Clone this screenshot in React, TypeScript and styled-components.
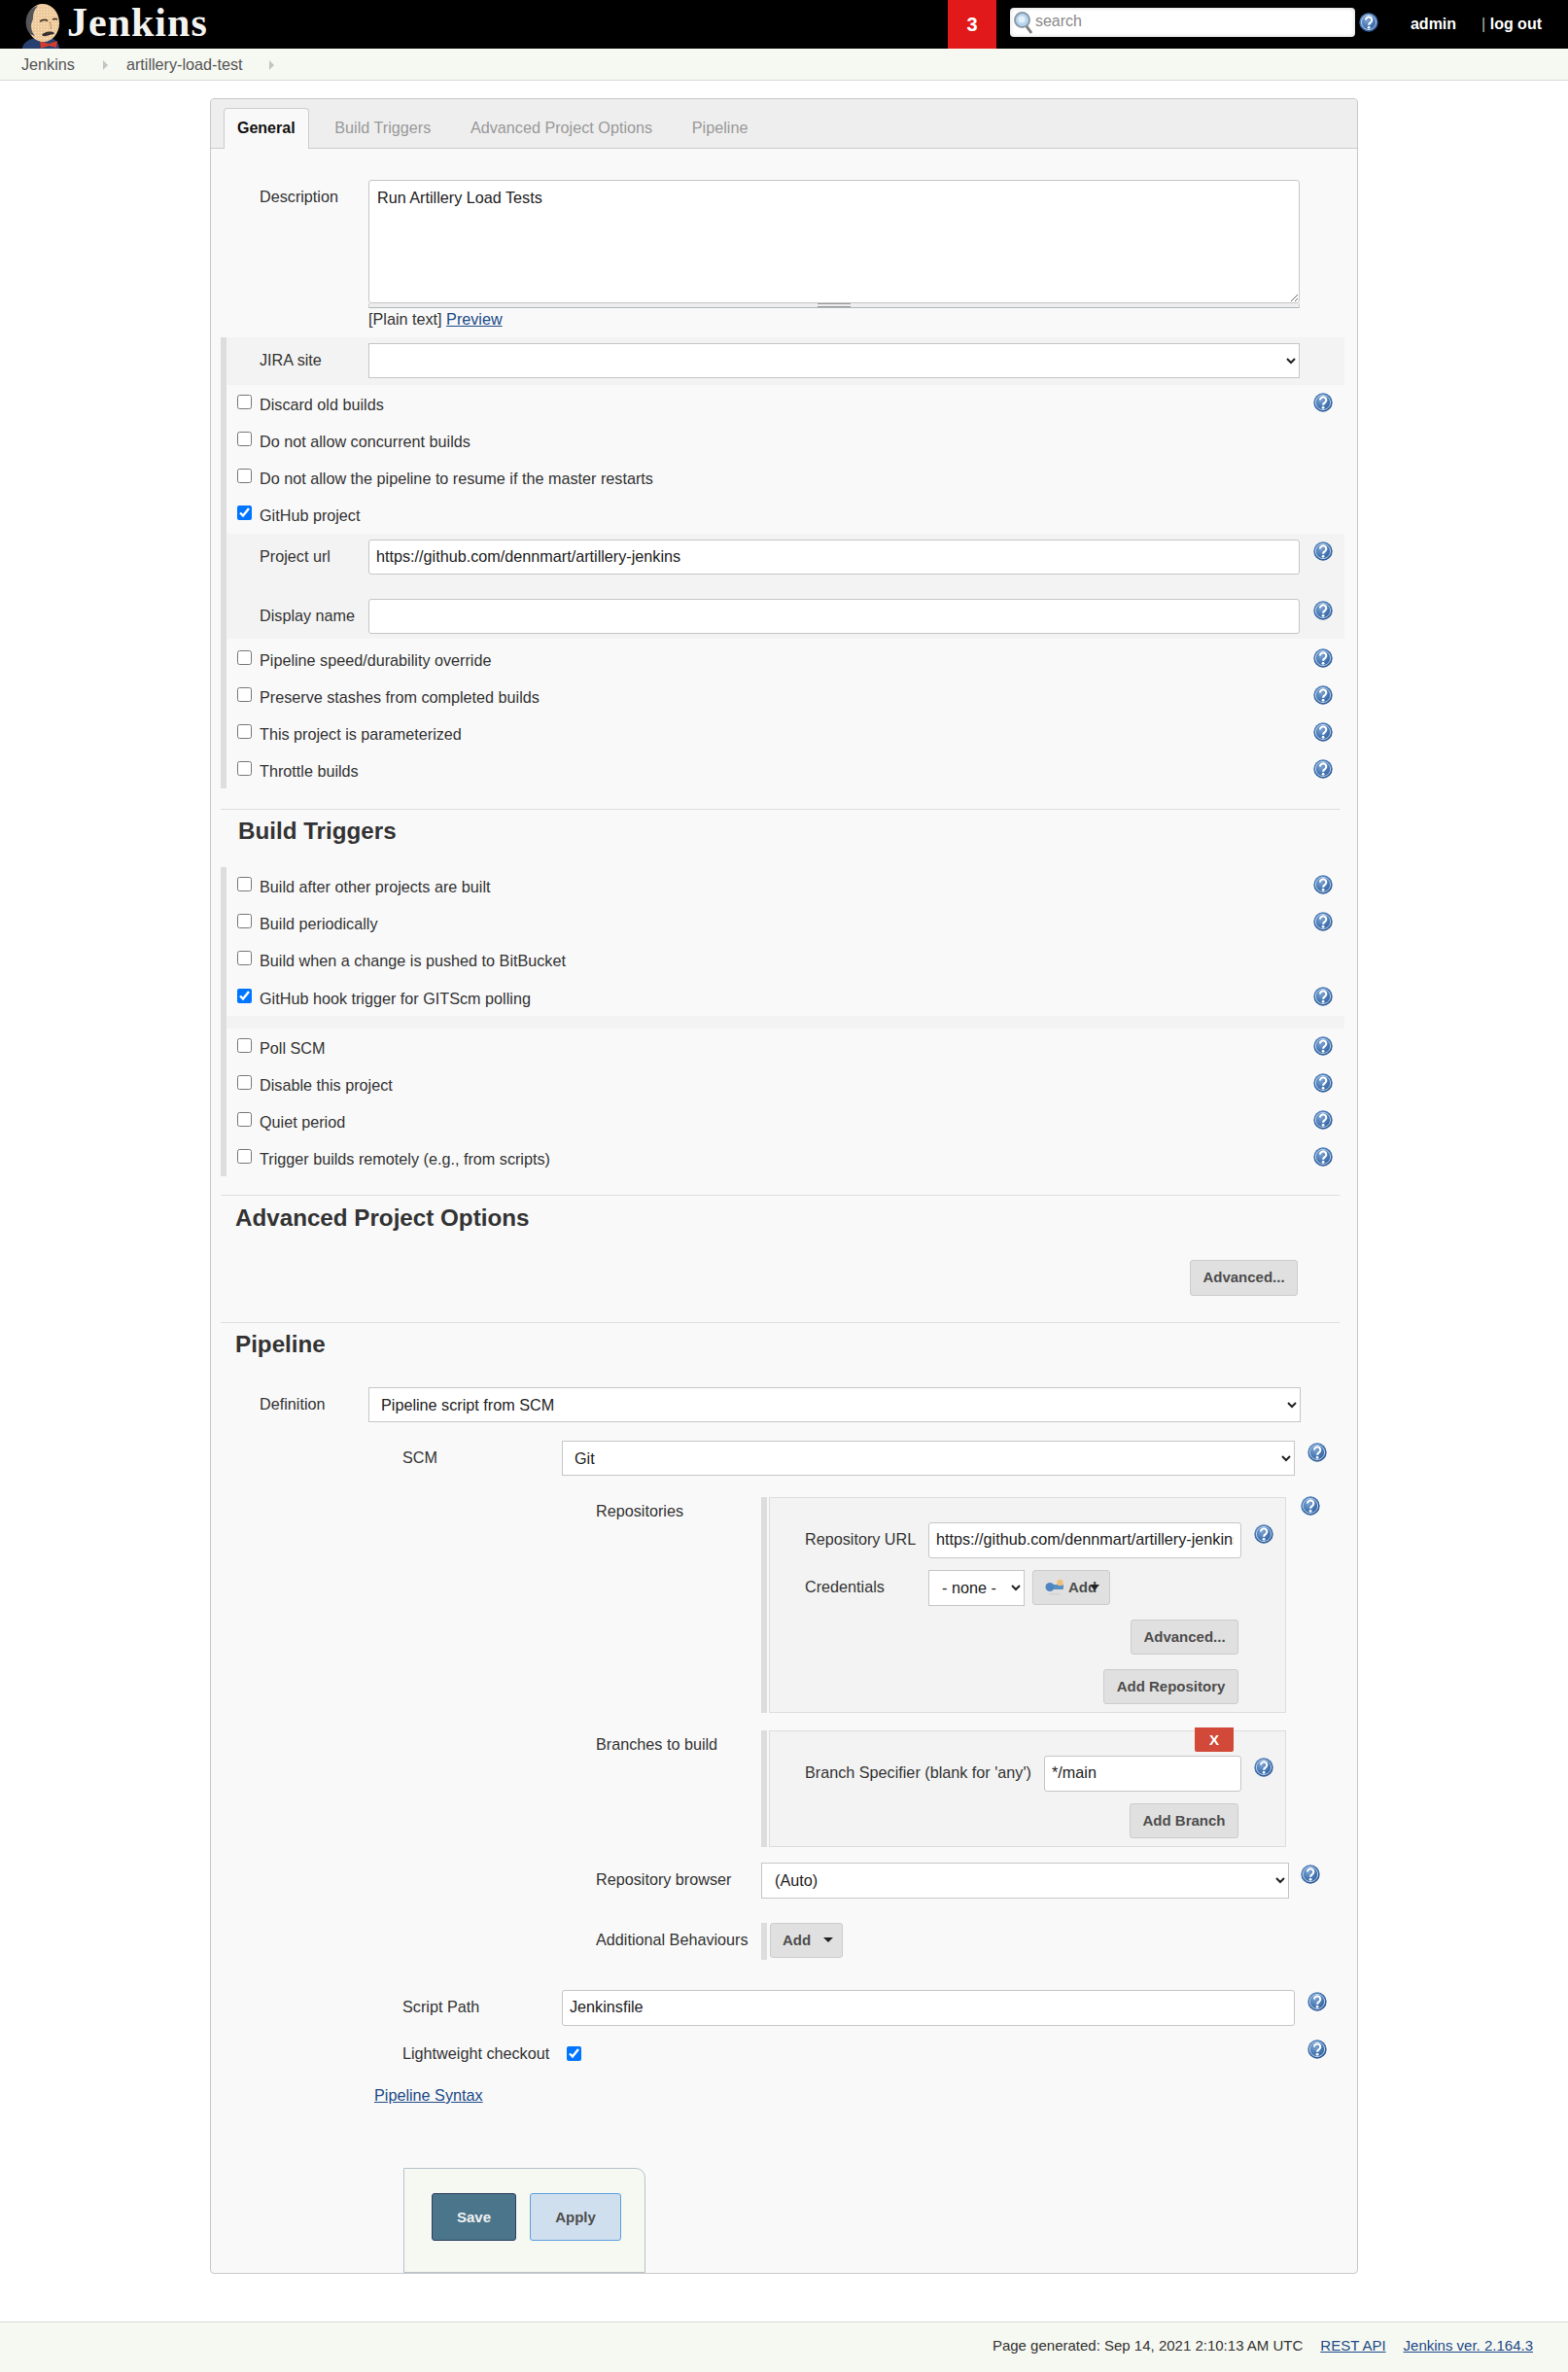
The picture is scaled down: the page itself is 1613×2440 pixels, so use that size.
import React from "react";
import styled, { createGlobalStyle } from "styled-components";

const Global = createGlobalStyle`
  html, body { margin: 0; padding: 0; background: #fff; }
  body { font-family: "Liberation Sans", Arial, sans-serif; font-size: 16.2px; color: #333; line-height: 16px; }
  * { box-sizing: border-box; }
`;

const Page = styled.div`
  width: 1613px;
  height: 2440px;
  display: flex;
  flex-direction: column;
`;

const Header = styled.header`
  height: 50px;
  background: #000;
  display: flex;
  align-items: flex-start;
  flex: none;
`;
const LogoMark = styled.svg`
  width: 60px;
  height: 50px;
  margin-left: 15px;
  flex: none;
`;
const LogoText = styled.span`
  font-family: "Liberation Serif", "Times New Roman", serif;
  font-weight: 700;
  font-size: 42px;
  line-height: 47px;
  letter-spacing: 1px;
  color: #f3f3f1;
  margin-left: -6px;
`;
const Count = styled.div`
  margin-left: auto;
  width: 50px;
  height: 50px;
  background: #e2191a;
  color: #fff;
  font-weight: 700;
  font-size: 20px;
  line-height: 50px;
  text-align: center;
  flex: none;
`;
const SearchBox = styled.div`
  width: 355px;
  height: 30px;
  margin: 8px 0 0 14px;
  border-radius: 4px;
  background: #fff;
  box-shadow: inset 0 0 4px rgba(0, 0, 0, 0.2);
  display: flex;
  align-items: flex-start;
  flex: none;
`;
const SearchIcon = styled.svg`
  width: 22px;
  height: 24px;
  margin: 4px 0 0 3px;
  flex: none;
`;
const SearchInput = styled.input`
  border: 0;
  outline: 0;
  background: transparent;
  font: 16px/28px "Liberation Sans", Arial, sans-serif;
  padding: 0;
  margin-left: 1px;
  height: 28px;
  flex: 1;
  &::placeholder { color: #8a8a8a; opacity: 1; }
`;
const HeaderLink = styled.a<{ $ml: number }>`
  color: #fff;
  font-weight: 700;
  font-size: 16px;
  line-height: 50px;
  margin-left: ${(p) => p.$ml}px;
  flex: none;
`;
const Pipe = styled.span`
  font-weight: 400;
  color: #bbb;
`;
const HeaderEnd = styled.div`
  width: 27px;
  flex: none;
`;

const Crumbs = styled.nav`
  height: 33px;
  background: #f6f8f2;
  border-bottom: 1px solid #d9d9d5;
  display: flex;
  align-items: center;
  padding-left: 22px;
  flex: none;
  color: #555;
`;
const CrumbArrow = styled.i<{ $ml: number; $mr: number }>`
  width: 0;
  height: 0;
  margin: 1px ${(p) => p.$mr}px 0 ${(p) => p.$ml}px;
  border-left: 5px solid #c4c4c4;
  border-top: 5px solid transparent;
  border-bottom: 5px solid transparent;
`;

const Panel = styled.main`
  width: 1181px;
  height: 2238px;
  margin: 18px 0 0 216px;
  border: 1px solid #c8c8c8;
  border-radius: 4px;
  background: #f9f9f9;
  flex: none;
`;
const TabBar = styled.div`
  height: 51px;
  background: #eeeeee;
  border-bottom: 1px solid #cccccc;
  border-radius: 3px 3px 0 0;
  display: flex;
  align-items: flex-end;
  padding-left: 13px;
  gap: 12.7px;
`;
const Tab = styled.div<{ $active?: boolean }>`
  height: ${(p) => (p.$active ? 42 : 41)}px;
  padding: ${(p) => (p.$active ? 12 : 11)}px 13px 0;
  margin-bottom: ${(p) => (p.$active ? -1 : 0)}px;
  font-weight: ${(p) => (p.$active ? 700 : 400)};
  font-size: ${(p) => (p.$active ? 16 : 16.2)}px;
  color: ${(p) => (p.$active ? "#111" : "#999")};
  background: ${(p) => (p.$active ? "#f9f9f9" : "transparent")};
  border: 1px solid ${(p) => (p.$active ? "#ccc" : "transparent")};
  border-bottom: 0;
  border-radius: 4px 4px 0 0;
`;

const Body = styled.div`
  padding: 0 13px 0 10px;
`;

const Field = styled.div<{ $mt?: number }>`
  display: flex;
  align-items: flex-start;
  margin-top: ${(p) => p.$mt ?? 0}px;
`;
const FieldLabel = styled.label<{ $w: number; $pad: number; $top?: number }>`
  width: ${(p) => p.$w}px;
  padding: ${(p) => p.$top ?? 9}px 0 0 ${(p) => p.$pad}px;
  flex: none;
`;
const Control = styled.div<{ $w: number }>`
  width: ${(p) => p.$w}px;
  flex: none;
`;
const TextArea = styled.textarea`
  display: block;
  width: 100%;
  height: 127px;
  padding: 9px 8px;
  border: 1px solid #c6c6c6;
  border-radius: 3px;
  background: #fff;
  color: #222;
  font: 16.2px/16px "Liberation Sans", Arial, sans-serif;
  resize: vertical;
`;
const Grippie = styled.div`
  height: 5px;
  background: #eeeeee;
  border: 1px solid #cfcfcf;
  border-top: 0;
  border-bottom-color: #aeb4b8;
  display: flex;
  justify-content: center;
  align-items: flex-start;
`;
const GripHandle = styled.span`
  width: 34px;
  height: 4px;
  border-top: 1px solid #999;
  border-bottom: 1px solid #999;
`;
const Below = styled.div`
  margin: 3px 0 11px;
`;
const LinkText = styled.a`
  color: #204a87;
  text-decoration: underline;
`;

const TextInput = styled.input<{ $w: number; $h?: number }>`
  display: block;
  width: ${(p) => p.$w}px;
  height: ${(p) => p.$h ?? 36}px;
  padding: 0 7px 2px;
  border: 1px solid #c6c6c6;
  border-radius: 3px;
  background: #fff;
  color: #222;
  font: 16.2px "Liberation Sans", Arial, sans-serif;
  flex: none;
  outline: 0;
`;
const Select = styled.select<{ $w: number; $h?: number; $pl?: number }>`
  display: block;
  width: ${(p) => p.$w}px;
  height: ${(p) => p.$h ?? 36}px;
  padding: 0 0 1px ${(p) => p.$pl ?? 8}px;
  border: 1px solid #c6c6c6;
  border-radius: 0;
  background: #fff;
  color: #222;
  font: 16.2px "Liberation Sans", Arial, sans-serif;
  flex: none;
`;
const Btn = styled.button<{ $w: number; $h?: number }>`
  width: ${(p) => p.$w}px;
  height: ${(p) => p.$h ?? 36}px;
  padding: 0 0 2px;
  border: 1px solid #cccccc;
  border-radius: 3px;
  background: #e0e0e0;
  color: #4d4d4d;
  font: 700 15px "Liberation Sans", Arial, sans-serif;
  flex: none;
`;
const BtnRow = styled.div<{ $mt?: number; $pr: number }>`
  display: flex;
  justify-content: flex-end;
  margin-top: ${(p) => p.$mt ?? 0}px;
  padding-right: ${(p) => p.$pr}px;
`;
const MenuBtn = styled(Btn)<{ $ml: number }>`
  margin-left: ${(p) => p.$ml}px;
  display: flex;
  align-items: center;
  padding-left: 12px;
  position: relative;
`;
const Caret = styled.i`
  width: 0;
  height: 0;
  border-top: 5px solid #222;
  border-left: 5px solid transparent;
  border-right: 5px solid transparent;
  margin-left: 13px;
`;
const OverCaret = styled.i`
  position: absolute;
  left: 58px;
  top: 14px;
  width: 0;
  height: 0;
  border-top: 6px solid #222;
  border-left: 5px solid transparent;
  border-right: 5px solid transparent;
`;
const KeyIcon = styled.svg`
  width: 20px;
  height: 20px;
  margin-right: 4px;
  flex: none;
`;

const HelpMark = styled.svg<{ $ml?: number; $mt?: number }>`
  width: 20px;
  height: 20px;
  margin-left: ${(p) => (p.$ml === undefined ? "auto" : `${p.$ml}px`)};
  margin-top: ${(p) => p.$mt ?? 0}px;
  flex: none;
`;
const GradientDefs = styled.svg`
  position: absolute;
  width: 0;
  height: 0;
`;
const HelpGradient = () => (
  <GradientDefs>
    <defs>
      <radialGradient id="hlp" cx="40%" cy="35%" r="70%">
        <stop offset="0%" stopColor="#7fa6d4" />
        <stop offset="60%" stopColor="#4273b0" />
        <stop offset="100%" stopColor="#2a5490" />
      </radialGradient>
      <pattern id="skin" width="3" height="3" patternUnits="userSpaceOnUse">
        <rect width="3" height="3" fill="#eec99a" />
        <rect width="1" height="1" fill="#fbeedd" />
      </pattern>
    </defs>
  </GradientDefs>
);
const Help = ({ ml, mt }: { ml?: number; mt?: number }) => (
  <HelpMark viewBox="0 0 20 20" $ml={ml} $mt={mt}>
    <circle cx="10" cy="10" r="9.7" fill="url(#hlp)" />
    <circle cx="10" cy="10" r="7.6" fill="none" stroke="#b9d0ea" strokeWidth="1" />
    <path d="M6.9 7.5a3.2 3.2 0 1 1 5 2.7c-1.2.8-1.8 1.2-1.8 2.6" fill="none" stroke="#fff" strokeWidth="2.1" />
    <circle cx="10.1" cy="15.3" r="1.4" fill="#fff" />
  </HelpMark>
);

const Barred = styled.div`
  border-left: 6px solid #dddddd;
`;
const GrayBlock = styled.div<{ $h: number; $mt?: number; $mb?: number; $pt?: number }>`
  height: ${(p) => p.$h}px;
  margin-top: ${(p) => p.$mt ?? 0}px;
  margin-bottom: ${(p) => p.$mb ?? 0}px;
  padding-top: ${(p) => p.$pt ?? 0}px;
  background: #f3f3f3;
`;
const CheckRow = styled.div<{ $h?: number }>`
  height: ${(p) => p.$h ?? 38}px;
  display: flex;
  align-items: flex-start;
  padding: 10px 12px 0 11px;
`;
const Check = styled.input<{ $mt?: number }>`
  width: 15px;
  height: 15px;
  margin: ${(p) => p.$mt ?? 0}px 0 0;
  flex: none;
  accent-color: #0075ff;
`;
const CheckLabel = styled.label`
  margin: 2px 0 0 8px;
`;
const Divider = styled.div<{ $mt: number }>`
  width: 1151px;
  height: 1px;
  margin-top: ${(p) => p.$mt}px;
  background: #dfdfdf;
`;
const Heading = styled.h2<{ $pad: number; $pt: number; $h: number }>`
  margin: 0;
  height: ${(p) => p.$h}px;
  padding: ${(p) => p.$pt}px 0 0 ${(p) => p.$pad}px;
  font-size: 24.2px;
  line-height: 28px;
  font-weight: 700;
  color: #333;
`;

const RepeatWrap = styled.div<{ $w: number }>`
  width: ${(p) => p.$w}px;
  flex: none;
  border-left: 6px solid #dddddd;
  padding-left: 2px;
`;
const RepeatBox = styled.div`
  position: relative;
  border: 1px solid #dddddd;
  background: #f3f3f3;
  padding: 25px 0 8px;
`;
const DeleteBtn = styled.button`
  position: absolute;
  top: -4px;
  right: 53px;
  width: 40px;
  height: 25px;
  padding: 0;
  border: 0;
  border-radius: 0 0 2px 2px;
  background: #d24939;
  color: #fff;
  font: 700 15px "Liberation Sans", Arial, sans-serif;
`;
const BarOnly = styled.div`
  display: flex;
  border-left: 6px solid #dddddd;
  padding: 0 0 2px 3px;
  flex: none;
`;
const SyntaxLine = styled.div`
  margin: 27px 0 0 158px;
`;
const Sticker = styled.div`
  width: 249px;
  height: 108px;
  margin: 67px 0 0 188px;
  border: 1px solid #b4c4cc;
  border-radius: 0 10px 0 0;
  background: #f6f8f2;
  padding: 25px 0 0 28px;
  display: flex;
  align-items: flex-start;
  gap: 14px;
`;
const PrimaryBtn = styled.button<{ $w: number }>`
  width: ${(p) => p.$w}px;
  height: 49px;
  padding: 0;
  border: 1px solid #2c3e5f;
  border-radius: 3px;
  background: #4a758a;
  color: #f2f2f2;
  font: 700 15px "Liberation Sans", Arial, sans-serif;
`;
const ApplyBtn = styled(PrimaryBtn)`
  border-color: #5c9ee0;
  background: #d0dfee;
  color: #4d4d4d;
`;

const Footer = styled.footer`
  height: 52px;
  margin-top: 49px;
  background: #f6f8f2;
  border-top: 1px solid #d9d9d5;
  display: flex;
  align-items: center;
  justify-content: flex-end;
  padding: 0 36px 4px 0;
  font-size: 15px;
  color: #333;
  flex: none;
`;
const FooterLink = styled(LinkText)`
  margin-left: 18px;
`;

const rowsGeneral1 = [
  ["Discard old builds", true],
  ["Do not allow concurrent builds", false],
  ["Do not allow the pipeline to resume if the master restarts", false],
] as const;
const rowsGeneral2 = [
  "Pipeline speed/durability override",
  "Preserve stashes from completed builds",
  "This project is parameterized",
  "Throttle builds",
];
const rowsTriggers2 = [
  "Poll SCM",
  "Disable this project",
  "Quiet period",
  "Trigger builds remotely (e.g., from scripts)",
];

const Row = ({ text, help, checked, h }: { text: string; help?: boolean; checked?: boolean; h?: number }) => (
  <CheckRow $h={h}>
    <Check type="checkbox" defaultChecked={checked} />
    <CheckLabel>{text}</CheckLabel>
    {help && <Help mt={-2} />}
  </CheckRow>
);

export default function App() {
  return (
    <Page>
      <Global />
      <HelpGradient />
      <Header>
        <LogoMark viewBox="0 0 60 50">
          <path d="M8 50c0-6 7-10 14-11h14c6 1 10 5 10 11z" fill="#27406f" />
          <path d="M26 42l9 3 9-3-1 7-8-2-8 3z" fill="#d33b2c" />
          <path d="M13 25C12 12 20 4 29 4c9 0 17 8 17 20 0 11-8 19-16 19-9 0-16-7-17-18z" fill="url(#skin)" />
          <path d="M12 27C10 15 17 7 24 6c-4 4-5 8-5 12 0 4-2 5-2 9 0 4 2 8 4 10-5-1-8-5-9-10z" fill="#55565a" />
          <path d="M26 22c3-2 6-2 8-.5M39 20c2-1 3-1 5 0" stroke="#4a3626" strokeWidth="1.6" fill="none" />
          <path d="M28 36c2-3 9-5 13-2-1 2-3 1-5 2-3 1-6 2-8 0z" fill="#3a3230" />
          <path d="M36 22c1 3 2 6 1 8" stroke="#b98a5e" strokeWidth="1" fill="none" />
        </LogoMark>
        <LogoText>Jenkins</LogoText>
        <Count>3</Count>
        <SearchBox>
          <SearchIcon viewBox="0 0 22 24">
            <circle cx="9.5" cy="8.5" r="7.5" fill="#b9d6ef" stroke="#8b9aa8" strokeWidth="2" />
            <circle cx="9" cy="8" r="3.5" fill="#e4f1fb" />
            <path d="M14 15l5 7" stroke="#7c7c7c" strokeWidth="3" />
          </SearchIcon>
          <SearchInput placeholder="search" />
        </SearchBox>
        <HelpMark viewBox="0 0 20 20" $ml={4} $mt={13}>
          <circle cx="10" cy="10" r="9.7" fill="url(#hlp)" />
          <circle cx="10" cy="10" r="7.6" fill="none" stroke="#b9d0ea" strokeWidth="1" />
          <path d="M6.9 7.5a3.2 3.2 0 1 1 5 2.7c-1.2.8-1.8 1.2-1.8 2.6" fill="none" stroke="#fff" strokeWidth="2.1" />
          <circle cx="10.1" cy="15.3" r="1.4" fill="#fff" />
        </HelpMark>
        <HeaderLink $ml={33}>admin</HeaderLink>
        <HeaderLink $ml={26}>
          <Pipe>|</Pipe> log out
        </HeaderLink>
        <HeaderEnd />
      </Header>
      <Crumbs>
        <span>Jenkins</span>
        <CrumbArrow $ml={29} $mr={19} />
        <span>artillery-load-test</span>
        <CrumbArrow $ml={27} $mr={0} />
      </Crumbs>
      <Panel>
        <TabBar>
          <Tab $active>General</Tab>
          <Tab>Build Triggers</Tab>
          <Tab>Advanced Project Options</Tab>
          <Tab>Pipeline</Tab>
        </TabBar>
        <Body>
          <Field $mt={32}>
            <FieldLabel $w={152} $pad={40}>Description</FieldLabel>
            <Control $w={958}>
              <TextArea defaultValue="Run Artillery Load Tests" />
              <Grippie><GripHandle /></Grippie>
              <Below>[Plain text] <LinkText href="#">Preview</LinkText></Below>
            </Control>
          </Field>
          <Barred>
            <GrayBlock $h={49} $pt={6}>
              <Field>
                <FieldLabel $w={146} $pad={34}>JIRA site</FieldLabel>
                <Select $w={958}><option></option></Select>
              </Field>
            </GrayBlock>
            {rowsGeneral1.map(([t, h]) => <Row key={t} text={t} help={h} />)}
            <Row text="GitHub project" checked />
            <GrayBlock $h={108} $mt={1} $mb={2} $pt={6}>
              <Field>
                <FieldLabel $w={146} $pad={34}>Project url</FieldLabel>
                <TextInput $w={958} defaultValue="https://github.com/dennmart/artillery-jenkins" />
                <Help ml={14} mt={2} />
              </Field>
              <Field $mt={25}>
                <FieldLabel $w={146} $pad={34}>Display name</FieldLabel>
                <TextInput $w={958} />
                <Help ml={14} mt={2} />
              </Field>
            </GrayBlock>
            {rowsGeneral2.map((t) => <Row key={t} text={t} help />)}
          </Barred>
          <Divider $mt={21} />
          <Heading $pad={18} $pt={8} $h={59}>Build Triggers</Heading>
          <Barred>
            <Row text="Build after other projects are built" help />
            <Row text="Build periodically" help />
            <Row text="Build when a change is pushed to BitBucket" h={39} />
            <Row text="GitHub hook trigger for GITScm polling" help checked />
            <GrayBlock $h={13} />
            {rowsTriggers2.map((t) => <Row key={t} text={t} help />)}
          </Barred>
          <Divider $mt={19} />
          <Heading $pad={15} $pt={9} $h={66}>Advanced Project Options</Heading>
          <BtnRow $pr={48}>
            <Btn $w={111} $h={37}>Advanced...</Btn>
          </BtnRow>
          <Divider $mt={27} />
          <Heading $pad={15} $pt={8} $h={66}>Pipeline</Heading>
          <Field>
            <FieldLabel $w={152} $pad={40}>Definition</FieldLabel>
            <Select $w={959}><option>Pipeline script from SCM</option></Select>
          </Field>
          <Field $mt={19}>
            <FieldLabel $w={351} $pad={187}>SCM</FieldLabel>
            <Select $w={754}><option>Git</option></Select>
            <Help ml={13} mt={2} />
          </Field>
          <Field $mt={22}>
            <FieldLabel $w={556} $pad={386} $top={6}>Repositories</FieldLabel>
            <RepeatWrap $w={540}>
              <RepeatBox>
                <Field>
                  <FieldLabel $w={163} $pad={36}>Repository URL</FieldLabel>
                  <TextInput $w={322} $h={37} defaultValue="https://github.com/dennmart/artillery-jenkins" />
                  <Help ml={13} mt={2} />
                </Field>
                <Field $mt={12}>
                  <FieldLabel $w={163} $pad={36}>Credentials</FieldLabel>
                  <Select $w={99} $h={37} $pl={9}><option>- none -</option></Select>
                  <MenuBtn $w={80} $ml={8}>
                    <KeyIcon viewBox="0 0 20 20">
                      <rect x="5" y="8" width="14" height="5" rx="1" fill="#5a8fc4" />
                      <circle cx="5" cy="10.5" r="4.5" fill="#4f86c0" />
                      <circle cx="15.5" cy="6" r="3.2" fill="#f0c078" />
                      <rect x="4" y="17" width="11" height="1.5" fill="#d2d2d2" />
                    </KeyIcon>
                    Add
                    <OverCaret />
                  </MenuBtn>
                </Field>
                <BtnRow $mt={14} $pr={48}><Btn $w={111}>Advanced...</Btn></BtnRow>
                <BtnRow $mt={15} $pr={48}><Btn $w={139}>Add Repository</Btn></BtnRow>
              </RepeatBox>
            </RepeatWrap>
            <Help ml={15} mt={-1} />
          </Field>
          <Field $mt={18}>
            <FieldLabel $w={556} $pad={386} $top={6}>Branches to build</FieldLabel>
            <RepeatWrap $w={540}>
              <RepeatBox>
                <DeleteBtn>X</DeleteBtn>
                <Field>
                  <FieldLabel $w={282} $pad={36}>Branch Specifier (blank for 'any')</FieldLabel>
                  <TextInput $w={203} $h={37} defaultValue="*/main" />
                  <Help ml={13} mt={2} />
                </Field>
                <BtnRow $mt={12} $pr={48}><Btn $w={112}>Add Branch</Btn></BtnRow>
              </RepeatBox>
            </RepeatWrap>
          </Field>
          <Field $mt={16}>
            <FieldLabel $w={556} $pad={386}>Repository browser</FieldLabel>
            <Select $w={543} $h={37} $pl={9}><option>(Auto)</option></Select>
            <Help ml={12} mt={2} />
          </Field>
          <Field $mt={25}>
            <FieldLabel $w={556} $pad={386}>Additional Behaviours</FieldLabel>
            <BarOnly>
              <MenuBtn $w={75} $ml={0}>Add<Caret /></MenuBtn>
            </BarOnly>
          </Field>
          <Field $mt={31}>
            <FieldLabel $w={351} $pad={187}>Script Path</FieldLabel>
            <TextInput $w={754} $h={37} defaultValue="Jenkinsfile" />
            <Help ml={13} mt={2} />
          </Field>
          <Field $mt={13}>
            <FieldLabel $w={356} $pad={187} $top={7}>Lightweight checkout</FieldLabel>
            <Check type="checkbox" defaultChecked $mt={8} />
            <Help ml={747} mt={1} />
          </Field>
          <SyntaxLine><LinkText href="#">Pipeline Syntax</LinkText></SyntaxLine>
          <Sticker>
            <PrimaryBtn $w={87}>Save</PrimaryBtn>
            <ApplyBtn $w={94}>Apply</ApplyBtn>
          </Sticker>
        </Body>
      </Panel>
      <Footer>
        <span>Page generated: Sep 14, 2021 2:10:13 AM UTC</span>
        <FooterLink href="#">REST API</FooterLink>
        <FooterLink href="#">Jenkins ver. 2.164.3</FooterLink>
      </Footer>
    </Page>
  );
}
